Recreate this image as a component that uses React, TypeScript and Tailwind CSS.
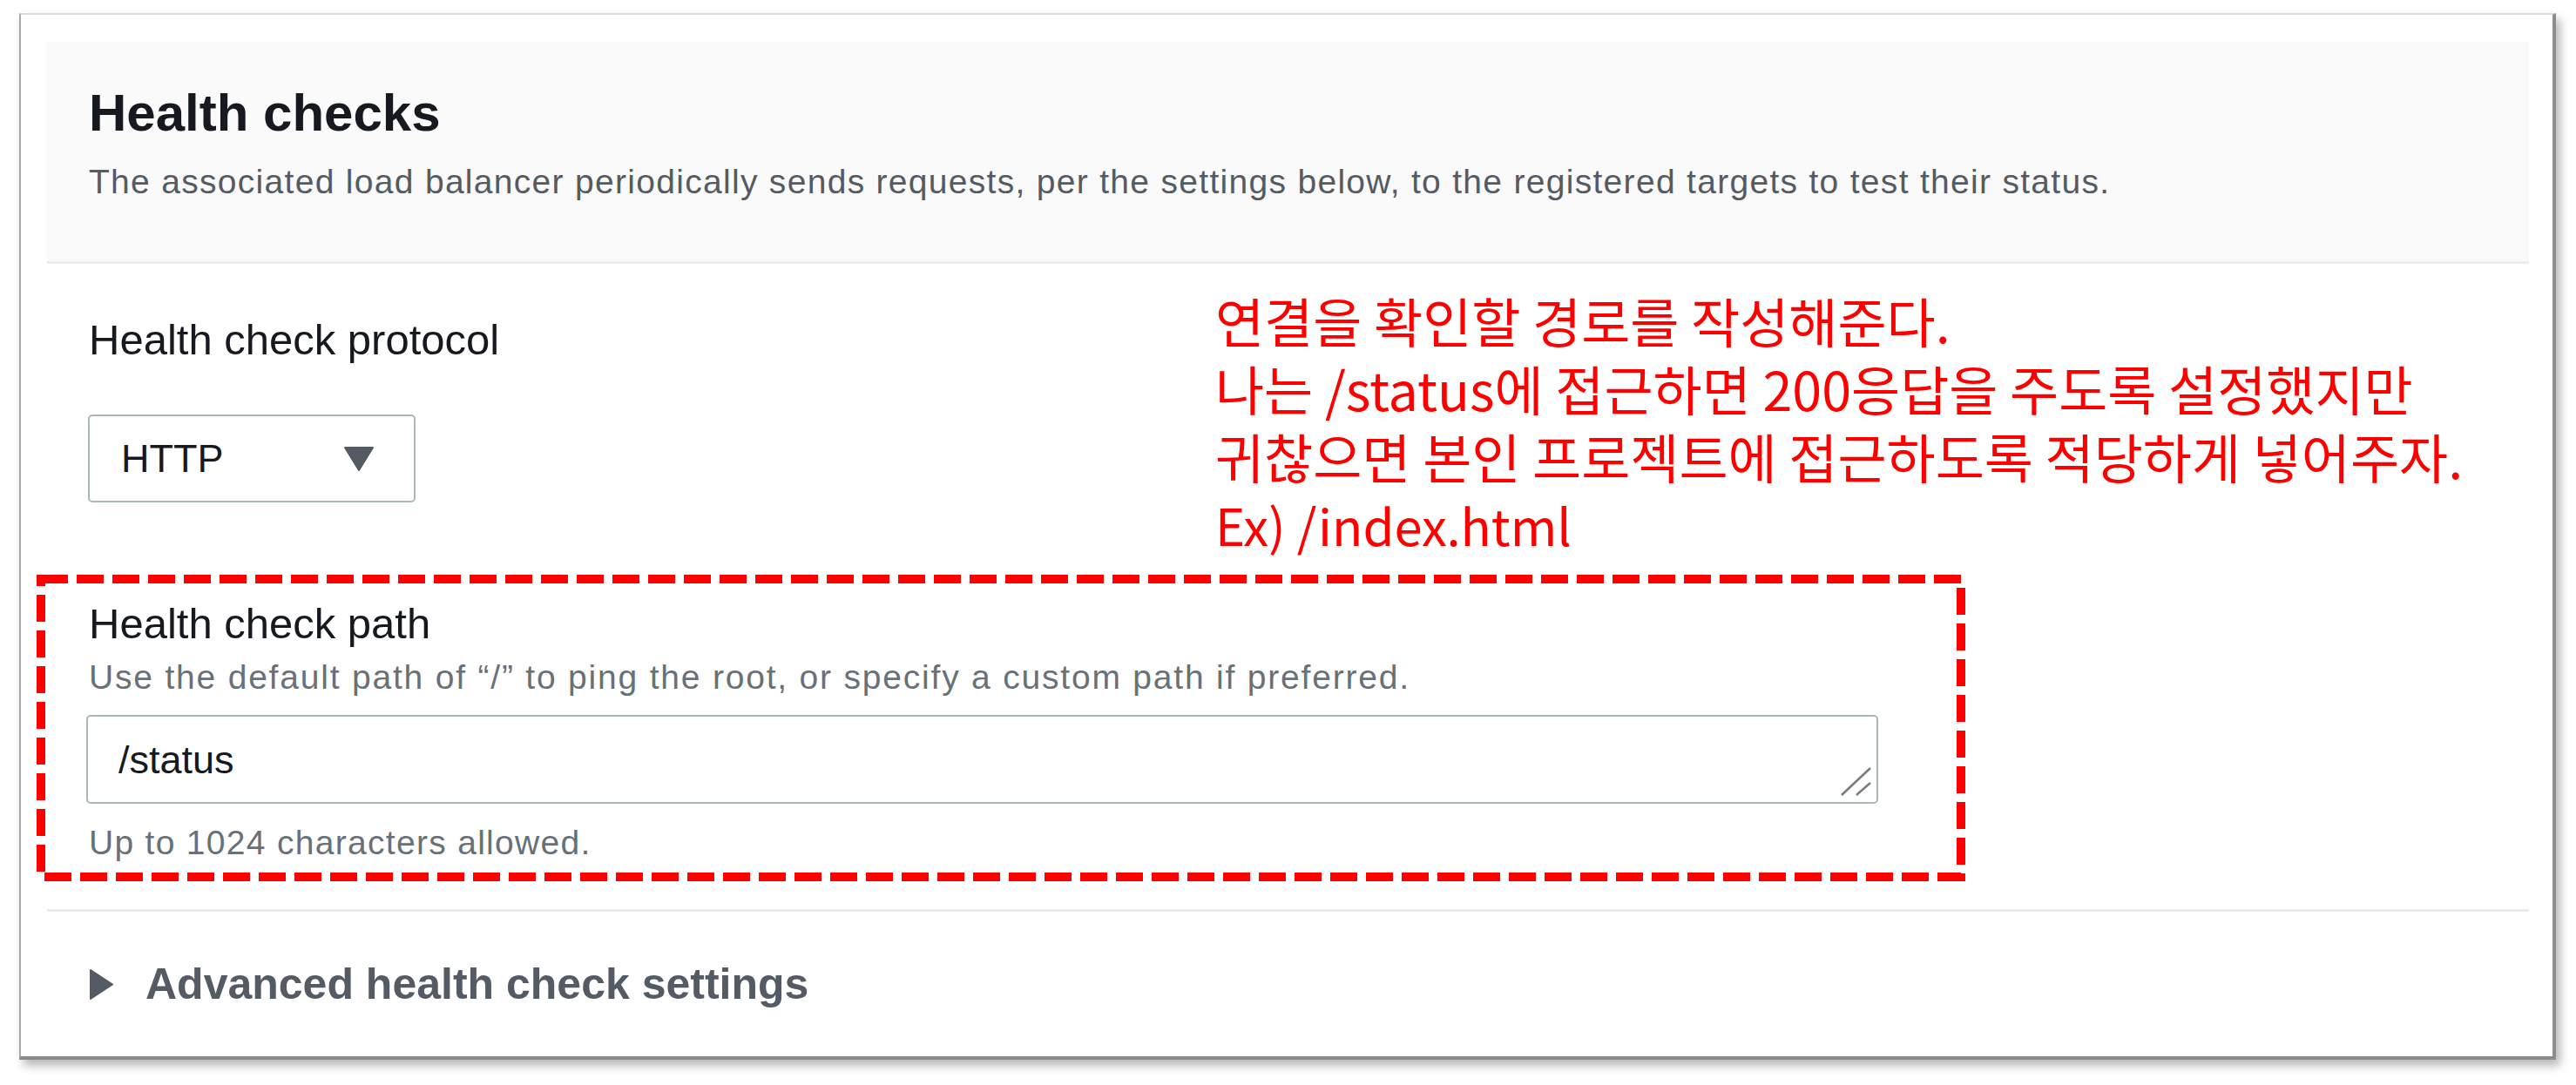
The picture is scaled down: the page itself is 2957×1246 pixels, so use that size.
export default function App() {
  return (
    <div className="w-[2957px] h-[1246px] bg-white overflow-hidden pt-[15px] pl-[22px] font-['Liberation_Sans',Arial,sans-serif]">
      <div className="w-[2912px] h-[1202px] bg-white border-l-2 border-t-2 border-r-4 border-b-4 border-l-[#a9a9a9] border-t-[#dcdcdc] border-r-[#8c8c8c] border-b-[#8a8a8a] shadow-[5px_7px_10px_rgba(0,0,0,0.28)]">
        <div className="ml-[30px] mt-[31px] w-[2849px]">
          {/* header */}
          <div className="h-[255px] bg-[#fafafa] border-b-[3px] border-[#eaeded] pl-[48px] pt-[46px]">
            <h2 className="text-[60px] leading-[72px] font-bold text-[#16191f]">Health checks</h2>
            <p className="mt-[19px] text-[39px] leading-[48px] tracking-[1.3px] text-[#545b64]">
              The associated load balancer periodically sends requests, per the settings below, to the registered targets to test their status.
            </p>
          </div>

          {/* body */}
          <div className="pl-[48px]">
            <div className="flex items-start">
              <div className="w-[1293px] shrink-0">
                <div className="mt-[57px] text-[49px] leading-[60px] text-[#16191f]">Health check protocol</div>
                <div className="mt-[56px] ml-[-1px] w-[376px] h-[101px] border-2 border-[#aab7b8] rounded-[5px] flex items-center justify-between pl-[36px] pr-[46px]">
                  <span className="text-[45px] leading-none text-[#16191f]">HTTP</span>
                  <svg width="34" height="28" viewBox="0 0 34 28">
                    <polygon points="1,1 33,1 17,27" fill="#545b64" stroke="#545b64" strokeWidth="2" strokeLinejoin="round" />
                  </svg>
                </div>
              </div>
              <div className="mt-[26px] text-[61px] leading-[78px] text-[#ff0000] font-['Noto_Sans_CJK_KR','Noto_Sans_CJK_SC',sans-serif] whitespace-nowrap">
                <div>연결을 확인할 경로를 작성해준다.</div>
                <div>나는 /status에 접근하면 200응답을 주도록 설정했지만</div>
                <div>귀찮으면 본인 프로젝트에 접근하도록 적당하게 넣어주자.</div>
                <div className="text-[58px]">Ex) /index.html</div>
              </div>
            </div>

            {/* highlighted field */}
            <div className="relative mt-[19px] ml-[-60px] w-[2214px] h-[352px] pl-[60px] pt-[26px]">
              <svg className="absolute inset-0 pointer-events-none" width="2214" height="352" viewBox="0 0 2214 352">
                <rect x="5" y="5" width="2204" height="342" fill="none" stroke="#ff0000" strokeWidth="10" strokeDasharray="31 10" />
              </svg>
              <div className="text-[49px] leading-[60px] text-[#16191f]">Health check path</div>
              <div className="mt-[8px] text-[39px] leading-[48px] tracking-[1.8px] text-[#687078]">
                Use the default path of “/” to ping the root, or specify a custom path if preferred.
              </div>
              <div className="relative mt-[19px] ml-[-3px] w-[2057px] h-[102px] border-2 border-[#aab7b8] rounded-[5px] flex items-center pl-[35px]">
                <span className="text-[45px] leading-none text-[#16191f]">/status</span>
                <svg className="absolute right-[6px] bottom-[7px]" width="36" height="34" viewBox="0 0 36 34">
                  <line x1="35" y1="2" x2="2" y2="33" stroke="#7a7a7a" strokeWidth="2.5" />
                  <line x1="35" y1="19" x2="19" y2="33" stroke="#7a7a7a" strokeWidth="2.5" />
                </svg>
              </div>
              <div className="mt-[21px] text-[39px] leading-[48px] tracking-[1.3px] text-[#687078]">Up to 1024 characters allowed.</div>
            </div>
          </div>

          {/* separator */}
          <div className="mt-[32px] h-[3px] bg-[#eaeded]" />

          {/* advanced */}
          <div className="pl-[48px] mt-[53px] flex items-center">
            <svg width="27" height="35" viewBox="0 0 27 35" className="ml-[1px]">
              <polygon points="1,1 26,17.5 1,34" fill="#545b64" stroke="#545b64" strokeWidth="2" strokeLinejoin="round" />
            </svg>
            <span className="ml-[37px] text-[50px] leading-[60px] font-bold text-[#545b64]">Advanced health check settings</span>
          </div>
        </div>
      </div>
    </div>
  );
}
